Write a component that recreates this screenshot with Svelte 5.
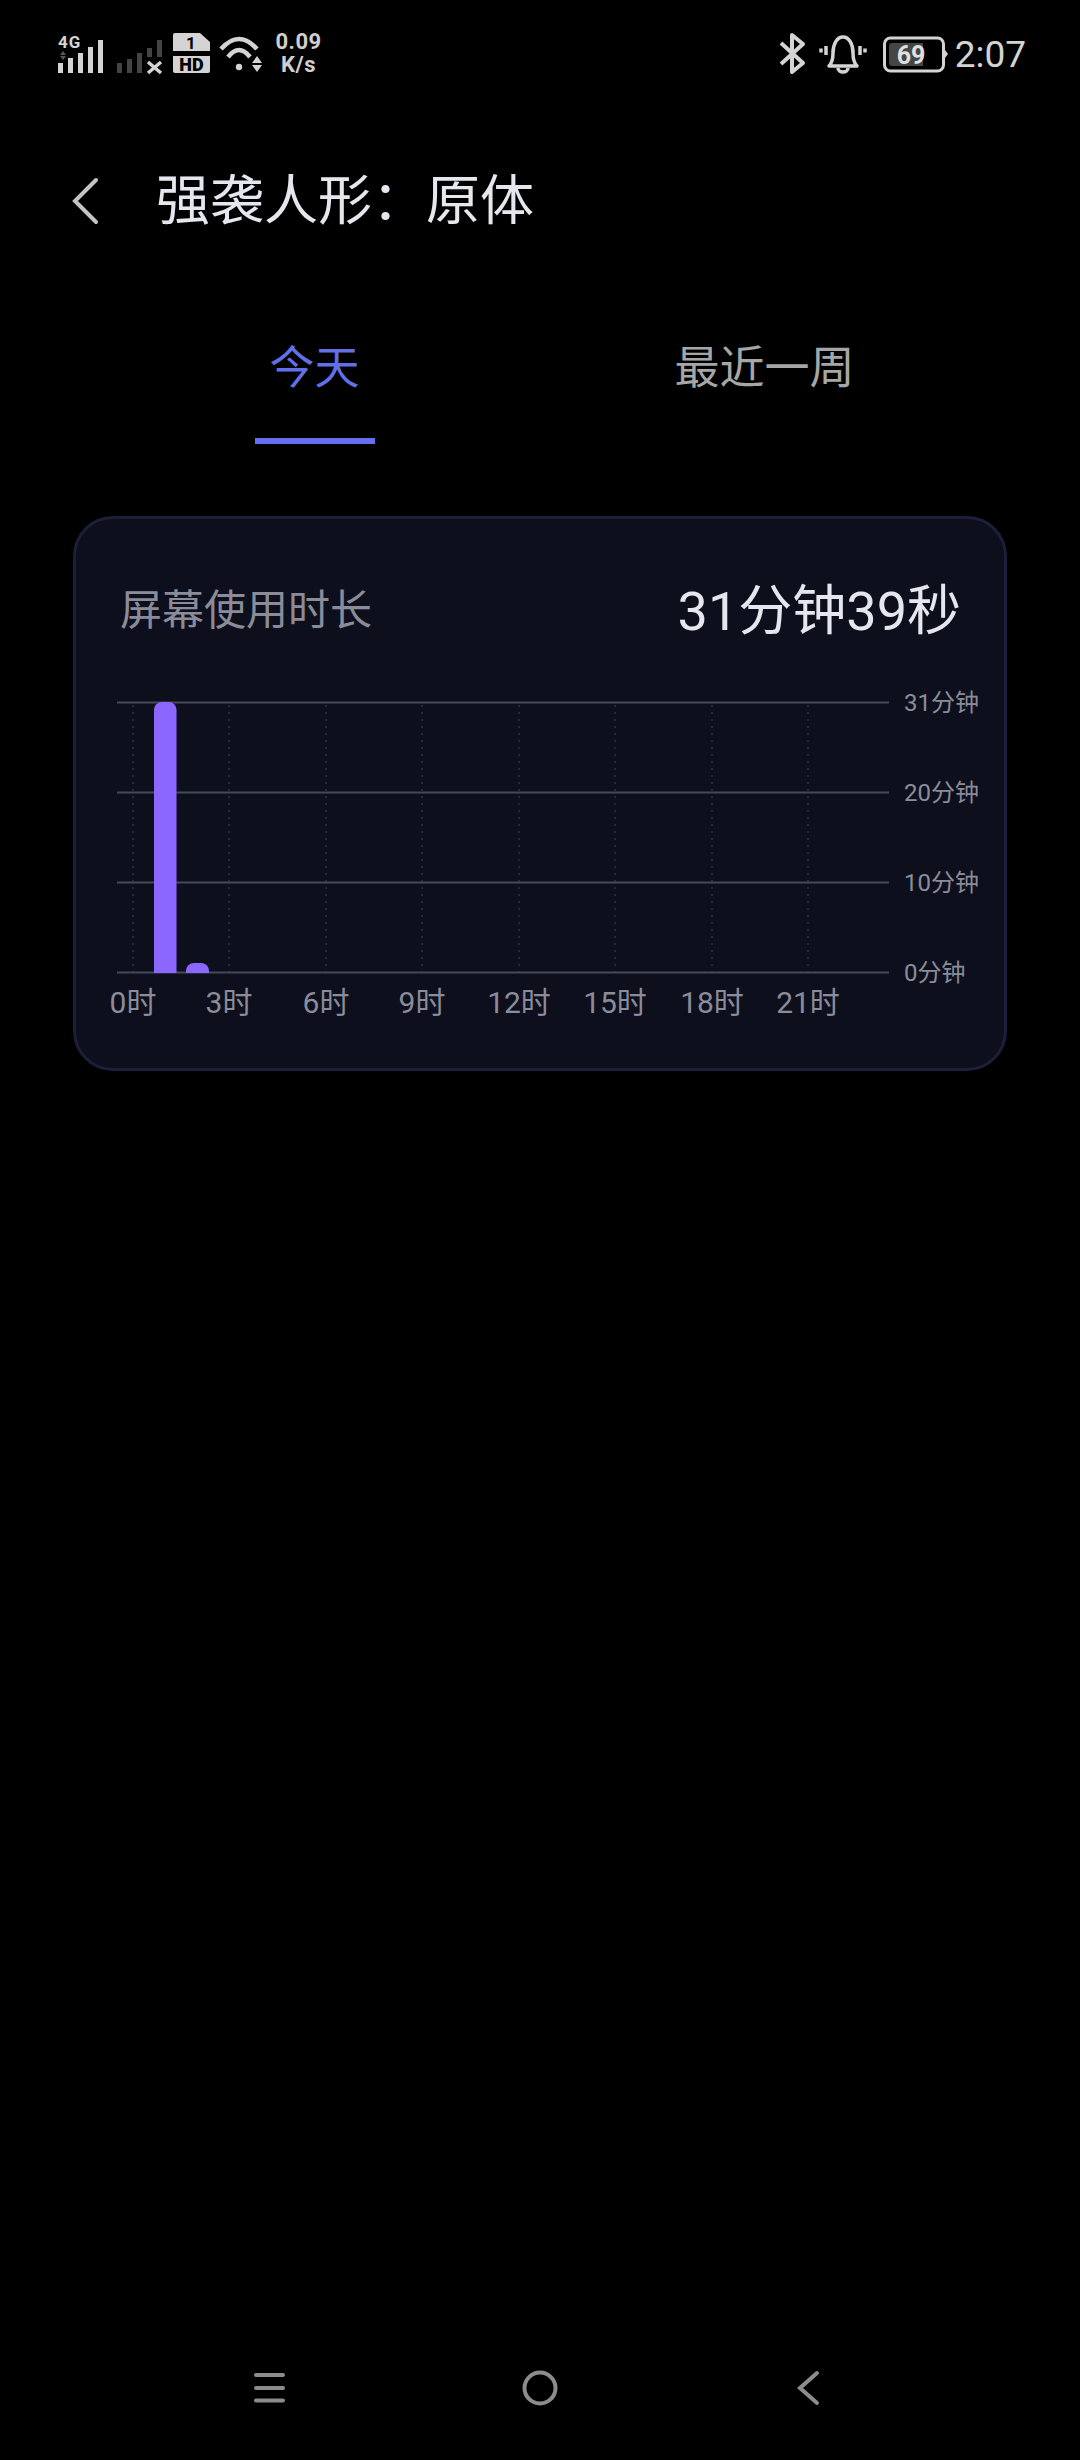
<script>
  const yLabels = [
    { t: '31分钟', y: 711 },
    { t: '20分钟', y: 801 },
    { t: '10分钟', y: 891 },
    { t: '0分钟', y: 981 }
  ];
  const gridY = [702.5, 792.5, 882.5, 972.5];
  const hours = [
    { t: '0时', x: 133 },
    { t: '3时', x: 229 },
    { t: '6时', x: 326 },
    { t: '9时', x: 422 },
    { t: '12时', x: 519 },
    { t: '15时', x: 615 },
    { t: '18时', x: 712 },
    { t: '21时', x: 808 }
  ];
</script>

<div class="page">
  <div class="status">
    <div class="status-left">
      <svg class="ico" width="45" height="40" viewBox="0 0 45 40">
        <text class="g4" x="0" y="15">4G</text>
        <path class="dimfill" d="M5 18l3 4H2zM5 27l-3-4h6z" />
        <rect class="lt" x="0" y="30" width="5" height="10" />
        <rect class="lt" x="10" y="25" width="5" height="15" />
        <rect class="lt" x="20" y="20" width="5" height="20" />
        <rect class="lt" x="30" y="14" width="5" height="26" />
        <rect class="lt" x="40" y="7" width="5" height="33" />
      </svg>
      <svg class="ico sim2" width="45" height="40" viewBox="0 0 45 40">
        <rect class="dk" x="0" y="30" width="5" height="10" />
        <rect class="dk" x="10" y="26" width="5" height="14" />
        <rect class="dk" x="20" y="20" width="5" height="20" />
        <rect class="dk" x="30" y="15" width="5" height="9" />
        <rect class="dk" x="40" y="7" width="5" height="17" />
        <path class="xmark" d="M31 29l13 11M44 29L31 40" />
      </svg>
      <svg class="ico hd" width="37" height="40" viewBox="0 0 37 40">
        <path class="lt" d="M2 0h25l10 9v9H0V2a2 2 0 0 1 2-2z" />
        <path class="lt" d="M0 23h37v15a2 2 0 0 1-2 2H2a2 2 0 0 1-2-2z" />
        <text class="hd-one" x="18" y="15.5">1</text>
        <text class="hd-txt" x="18.5" y="37.5">HD</text>
      </svg>
      <svg class="ico wifi" width="43" height="40" viewBox="0 0 43 40">
        <path class="arc" d="M2 16Q20-4 38 16" />
        <path class="arc" d="M9 24Q20 10 31 24" />
        <circle class="lt" cx="20" cy="34" r="3.200" />
        <path class="lt" d="M38 23l5 7h-10zM38 39l-5-7h10z" />
      </svg>
      <div class="speed"><span>0.09</span><span>K/s</span></div>
    </div>
    <div class="status-right">
      <svg class="ico" width="27" height="40" viewBox="0 0 27 40">
        <path class="bt" d="M2 10l22 20-11 9V2l11 9L2 31" />
      </svg>
      <svg class="ico bell" width="46" height="40" viewBox="0 0 46 40">
        <path class="bl" d="M9 33c3-3 4-6 4-13 0-9 4-16 10-16s10 7 10 16c0 7 1 10 4 13z" />
        <path class="bl" d="M18 35a5 4 0 0 0 10 0" />
        <path class="bl" d="M6 13v9M40 13v9M1 15.500v4M45 15.500v4" />
      </svg>
      <svg class="ico batt" width="65" height="40" viewBox="0 0 65 40">
        <rect class="batt-o" x="1.500" y="5" width="59" height="33" rx="6" />
        <path class="dkfill" d="M9 10h31v23H9a3 3 0 0 1-3-3V13a3 3 0 0 1 3-3z" />
        <path class="lt" d="M62 17l3 4-3 4z" />
        <text class="batt-t" x="28" y="30.500">69</text>
      </svg>
      <span class="clock">2:07</span>
    </div>
  </div>

  <header class="header">
    <svg class="back" width="28" height="48" viewBox="0 0 28 48">
      <path d="M25 3L4 24l21 21" />
    </svg>
    <h1 class="title">强袭人形：原体</h1>
  </header>

  <div class="tabs">
    <div class="tab active">
      <span class="tab-label">今天</span>
      <span class="tab-line"></span>
    </div>
    <div class="tab">
      <span class="tab-label">最近一周</span>
      <span class="tab-line off"></span>
    </div>
  </div>

  <section class="card">
    <div class="card-head">
      <span class="card-label">屏幕使用时长</span>
      <span class="card-value">31分钟39秒</span>
    </div>
    <svg class="chart" width="930" height="369" viewBox="75 700 930 369">
      {#each hours as h}
        <line class="vgrid" x1={h.x} x2={h.x} y1="705" y2="972" />
      {/each}
      {#each gridY as y}
        <line class="hgrid" x1="117" x2="889" y1={y} y2={y} />
      {/each}
      <path class="bar" d="M154 973V710a8 8 0 0 1 8-8h6.500a8 8 0 0 1 8 8V973z" />
      <path class="bar" d="M186 973v-2a8 8 0 0 1 8-8h7a8 8 0 0 1 8 8v2z" />
      {#each yLabels as l}
        <text class="ylabel" x="904" y={l.y}>{l.t}</text>
      {/each}
      {#each hours as h}
        <text class="xlabel" x={h.x} y="1013">{h.t}</text>
      {/each}
    </svg>
  </section>

  <nav class="nav">
    <svg class="nav-menu" width="31" height="30" viewBox="0 0 31 30">
      <path d="M2 2h27M2 15h27M2 27.500h27" />
    </svg>
    <svg class="nav-home" width="36" height="36" viewBox="0 0 36 36">
      <circle cx="18" cy="18" r="15.500" />
    </svg>
    <svg class="nav-back" width="25" height="36" viewBox="0 0 25 36">
      <path d="M21 3L4 18l17 15" />
    </svg>
  </nav>
</div>

<style>
  :global(body) {
    margin: 0;
    background: #000;
  }
  .page {
    width: 1080px;
    height: 2460px;
    background: #000;
    display: flex;
    flex-direction: column;
    font-family: Roboto, "Noto Sans CJK SC", sans-serif;
    overflow: hidden;
  }
  .status {
    height: 106px;
    flex: none;
    display: flex;
    justify-content: space-between;
    align-items: center;
    padding: 0 54px 0 58px;
  }
  .status-left,
  .status-right {
    display: flex;
    align-items: center;
  }
  .ico {
    display: block;
    flex: none;
    overflow: visible;
  }
  .sim2 { margin-left: 14px; }
  .hd { margin-left: 11px; }
  .wifi { margin-left: 9px; }
  .lt { fill: #d4d4d4; }
  .dk { fill: #444; }
  .dimfill { fill: #555; }
  .dkfill { fill: #454545; }
  .g4 {
    font: 700 17px Roboto, sans-serif;
    letter-spacing: 1px;
    fill: #d4d4d4;
  }
  .xmark,
  .arc,
  .bt,
  .bl,
  .batt-o {
    fill: none;
    stroke: #d4d4d4;
  }
  .xmark { stroke-width: 3.500; }
  .arc { stroke-width: 4.500; }
  .bt { stroke-width: 4; stroke-linejoin: round; }
  .bl { stroke-width: 3.500; stroke-linejoin: round; }
  .batt-o { stroke-width: 3; }
  .hd-one {
    font: 700 17px Roboto, sans-serif;
    fill: #000;
    text-anchor: middle;
  }
  .hd-txt {
    font: 900 18px Roboto, sans-serif;
    fill: #000;
    text-anchor: middle;
  }
  .batt-t {
    font: 700 25px Roboto, sans-serif;
    fill: #e0e0e0;
    text-anchor: middle;
  }
  .speed {
    margin-left: 11px;
    width: 51px;
    display: flex;
    flex-direction: column;
    align-items: center;
    font-size: 22px;
    letter-spacing: 0.5px;
    line-height: 23px;
    font-weight: 700;
    color: #cfcfcf;
  }
  .bell { margin-left: 14px; }
  .batt { margin-left: 17px; }
  .clock {
    margin: 3px 0 0 7px;
    font-size: 37px;
    line-height: 40px;
    color: #d4d4d4;
  }
  .header {
    height: 190px;
    flex: none;
    display: flex;
    align-items: center;
    padding-left: 71px;
  }
  .back { flex: none; }
  .back path {
    fill: none;
    stroke: #c4c4c4;
    stroke-width: 4;
    stroke-linecap: round;
  }
  .title {
    margin: 2px 0 0 57px;
    font-size: 54px;
    font-weight: 400;
    line-height: 70px;
    color: #e6e6ee;
  }
  .tabs {
    flex: none;
    display: grid;
    grid-template-columns: 449px 451px;
    padding-left: 90px;
  }
  .tab {
    display: flex;
    flex-direction: column;
    align-items: center;
  }
  .tab-label {
    height: 142px;
    line-height: 146px;
    font-size: 45px;
    color: #a6a6a6;
  }
  .tab.active .tab-label { color: #6270e8; }
  .tab-line {
    width: 120px;
    height: 6px;
    background: #636ff0;
  }
  .tab-line.off { background: transparent; }
  .card {
    flex: none;
    box-sizing: border-box;
    width: 934px;
    height: 555px;
    margin: 72px 0 0 73px;
    background: #0d101c;
    border: 3px solid #1c1f3a;
    border-radius: 40px;
  }
  .card-head {
    box-sizing: border-box;
    height: 181px;
    display: flex;
    justify-content: space-between;
    align-items: center;
    padding: 0 43px 6px 44px;
  }
  .card-label {
    font-size: 42px;
    color: #8b8c9a;
  }
  .card-value {
    font-size: 54px;
    color: #e6e6ee;
  }
  .chart {
    display: block;
    margin-left: -1px;
    overflow: visible;
  }
  .vgrid {
    stroke: #3f4252;
    stroke-width: 1;
    stroke-dasharray: 2 5;
  }
  .hgrid {
    stroke: #45485a;
    stroke-width: 2;
  }
  .bar { fill: #8b66ff; }
  .ylabel {
    font-size: 24px;
    fill: #8b8c9a;
  }
  .xlabel {
    font-size: 30px;
    fill: #8b8c9a;
    text-anchor: middle;
  }
  .nav {
    margin-top: auto;
    height: 144px;
    flex: none;
    display: flex;
    align-items: center;
    padding-left: 254px;
  }
  .nav svg {
    display: block;
    flex: none;
  }
  .nav-home { margin-left: 237px; }
  .nav-back { margin-left: 238px; }
  .nav path,
  .nav circle {
    fill: none;
    stroke: #8c8c8c;
    stroke-width: 4;
    stroke-linecap: round;
  }
</style>
